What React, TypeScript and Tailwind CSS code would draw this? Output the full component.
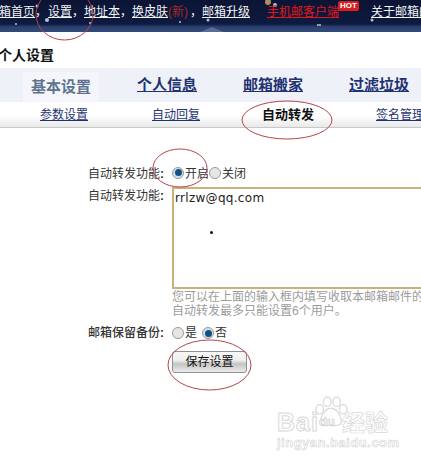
import React from "react";

const font = { fontFamily: '"Liberation Sans", "Noto Sans CJK SC", sans-serif' };

function Radio({ on, className = "" }: { on?: boolean; className?: string }) {
  return (
    <span
      className={`inline-flex h-[12px] w-[12px] shrink-0 items-center justify-center rounded-full border border-[#9a9a9a] ${
        on ? "bg-[#cfe0ee]" : "bg-[#e6e6e6]"
      } ${className}`}
    >
      {on && <span className="h-[7px] w-[7px] rounded-full bg-[#12507f]" />}
    </span>
  );
}

function Ring({ x, y, w, h }: { x: number; y: number; w: number; h: number }) {
  return (
    <svg
      className="pointer-events-none absolute"
      style={{ left: x, top: y }}
      width={w}
      height={h}
      viewBox={`0 0 ${w} ${h}`}
    >
      <ellipse cx={w / 2} cy={h / 2} rx={w / 2 - 1} ry={h / 2 - 1} fill="none" stroke="#b5454a" strokeWidth="1" />
    </svg>
  );
}

function Starfield() {
  const stars = [
    [37, 6, 1.5], [47, 20, 2], [62, 16, 1], [90, 23, 1], [118, 9, 1], [150, 5, 1], [208, 20, 1.5],
    [268, 2, 3], [275, 5, 2], [230, 12, 1], [320, 25, 1], [345, 7, 1], [372, 20, 1.5], [380, 17, 1],
    [318, 25, 1], [410, 8, 1], [180, 22, 1], [16, 24, 1],
  ];
  return (
    <svg className="absolute left-0 top-0" width="421" height="32" viewBox="0 0 421 32">
      {stars.map(([x, y, r], i) => (
        <circle key={i} cx={x} cy={y} r={r} fill={i === 7 ? "#c9a565" : "#cfe0f5"} opacity="0.85" />
      ))}
      <path d="M200 32 L212 27 L224 32 Z" fill="#6d7ea0" opacity="0.7" />
    </svg>
  );
}

function Watermark() {
  return (
    <div className="pointer-events-none absolute left-[277px] top-[396px] h-[54px] w-[116px]">
      <svg className="absolute left-[35px] top-0" width="38" height="32" viewBox="0 0 38 34">
        <g fill="#fff" stroke="#dcdcdc" strokeWidth="1.5">
          <ellipse cx="7" cy="14" rx="4" ry="5" />
          <ellipse cx="15" cy="6" rx="4" ry="5" />
          <ellipse cx="25" cy="6" rx="4" ry="5" />
          <ellipse cx="32" cy="14" rx="4" ry="5" />
          <path d="M19 13 C13 13 9 20 8 25 C7 31 13 32 19 31 C26 32 31 31 30 25 C29 20 25 13 19 13 Z" />
        </g>
      </svg>
      <div className="absolute left-0 top-[12px] whitespace-nowrap text-[25px] font-bold leading-[28px] tracking-[1px] text-white [-webkit-text-stroke:1px_#d8d8d8]">
        Bai
      </div>
      <div className="absolute left-[42px] top-[18px] whitespace-nowrap text-[13px] font-bold leading-[16px] text-[#fafafa] [-webkit-text-stroke:0.7px_#d0d0d0]">
        du
      </div>
      <div className="absolute left-[65px] top-[15px] whitespace-nowrap text-[23px] font-bold leading-[24px] text-white [-webkit-text-stroke:0.7px_#d8d8d8]">
        经验
      </div>
      <div className="absolute left-0 top-[40px] whitespace-nowrap text-[13px] font-bold leading-[14px] tracking-[0.5px] text-white [-webkit-text-stroke:0.6px_#d4d4d4]">
        jingyan.baidu.com
      </div>
    </div>
  );
}

function Label({ text, className = "" }: { text: string; className?: string }) {
  return (
    <div className={`flex items-center justify-end pr-[6px] leading-[14px] ${className}`}>
      <span>{text}</span>
      <span className="w-[6px] font-bold">:</span>
    </div>
  );
}

export default function App() {
  return (
    <div className="relative h-[470px] w-[421px] overflow-hidden bg-white text-[12px] text-[#222]" style={font}>
      {/* top bar */}
      <div className="relative h-[32px] overflow-hidden bg-[linear-gradient(#0b1433_0,#0e1a40_24px,#2c4270_27px,#32497a_32px)]">
        <Starfield />
        <div className="relative flex h-[24px] w-max items-center whitespace-nowrap leading-[14px] text-[#f2f2f2]">
          <span className="ml-[-13px] w-[48px] underline">邮箱首页</span>
          <span className="w-[13px]">，</span>
          <span className="w-[24px] underline">设置</span>
          <span className="w-[12px]">，</span>
          <span className="w-[36px] underline">地址本</span>
          <span className="w-[12px]">，</span>
          <span className="w-[36px] underline">换皮肤</span>
          <span className="w-[22px] text-[#a52a2a]">(新)</span>
          <span className="w-[12px]">，</span>
          <span className="w-[48px] underline">邮箱升级</span>
          <span className="ml-[17px] w-[71px] text-[#e01818] underline">手机邮客户端</span>
          <span className="mb-[12px] flex h-[10px] w-[21px] items-center justify-center rounded-[2px] bg-[#d81e1e] text-[8px] font-bold leading-[10px] text-white">
            HOT
          </span>
          <span className="ml-[12px] underline">关于邮箱的</span>
        </div>
      </div>

      {/* title */}
      <div className="ml-[-2px] flex h-[36px] items-end pb-[4px] text-[14px] font-bold leading-[18px] text-[#111]">
        个人设置
      </div>

      {/* tabs */}
      <div className="flex h-[34px] w-max min-w-full items-stretch whitespace-nowrap bg-[#eef1f8] text-[15px] font-bold leading-[18px] text-[#1f3272]">
        <span className="ml-[23px] mt-[4px] flex w-[76px] items-center justify-center bg-[#f4f6fb] text-[#5f7390]">
          基本设置
        </span>
        <span className="ml-[38px] flex w-[60px] items-center underline">个人信息</span>
        <span className="ml-[46px] flex w-[60px] items-center underline">邮箱搬家</span>
        <span className="ml-[46px] flex w-[60px] items-center underline">过滤垃圾</span>
      </div>

      {/* sub tabs */}
      <div className="flex h-[26px] items-center whitespace-nowrap border-b border-[#c8c8c8] bg-[linear-gradient(#ffffff,#ffffff_55%,#e9e9e9)] leading-[14px] text-[#1f3272]">
        <span className="ml-[40px] w-[48px] shrink-0 underline">参数设置</span>
        <span className="ml-[64px] w-[48px] shrink-0 underline">自动回复</span>
        <span className="ml-[62px] w-[52px] shrink-0 text-[13px] font-bold text-[#111]">自动转发</span>
        <span className="ml-[62px] shrink-0 underline">签名管理</span>
      </div>

      {/* form */}
      <div className="mt-[35px] grid grid-cols-[172px_300px] text-[#333]">
        <Label text="自动转发功能" className="h-[24px] pb-[2px]" />
        <div className="flex h-[24px] items-center pb-[2px] leading-[14px]">
          <Radio on className="mb-[3px]" />
          <span className="ml-[1px] w-[24px]">开启</span>
          <Radio className="mb-[3px]" />
          <span className="ml-[1px]">关闭</span>
        </div>

        <Label text="自动转发功能" className="h-[18px]" />
        <div className="h-[102px] border-2 border-[#c9b27a] bg-white pl-[1px] pt-[1px] text-[12px] leading-[16px] tracking-[0.3px] text-[#222] [font-family:'DejaVu_Sans',sans-serif]">
          rrlzw@qq.com
          <div className="ml-[35px] mt-[25px] h-[3px] w-[3px] rounded-full bg-[#111]" />
        </div>

        <div className="col-start-2 mt-[1px] text-[12px] leading-[14px] text-[#9c9c9c]">
          <div className="whitespace-nowrap">您可以在上面的输入框内填写收取本邮箱邮件的邮箱地址</div>
          <div className="whitespace-nowrap">自动转发最多只能设置6个用户。</div>
        </div>

        <Label text="邮箱保留备份" className="mt-[5px] h-[20px] font-medium" />
        <div className="mt-[5px] flex h-[20px] items-center leading-[14px]">
          <Radio />
          <span className="ml-[1px] w-[17px]">是</span>
          <Radio on />
          <span className="ml-[1px]">否</span>
        </div>

        <div className="col-start-2 mt-[8px]">
          <button className="flex h-[22px] w-[75px] items-center justify-center rounded-[3px] border border-[#8d9096] bg-[linear-gradient(#f6f6f6,#f0f0f0_40%,#c4c4c4_60%,#ececec)] text-[12px] leading-[14px] text-[#111]">
            保存设置
          </button>
        </div>
      </div>

      {/* hand-drawn annotation rings */}
      <Ring x={35} y={-12} w={59} h={53} />
      <Ring x={241} y={100} w={92} h={40} />
      <Ring x={152} y={148} w={56} h={40} />
      <Ring x={167} y={339} w={85} h={52} />

      <Watermark />
    </div>
  );
}
